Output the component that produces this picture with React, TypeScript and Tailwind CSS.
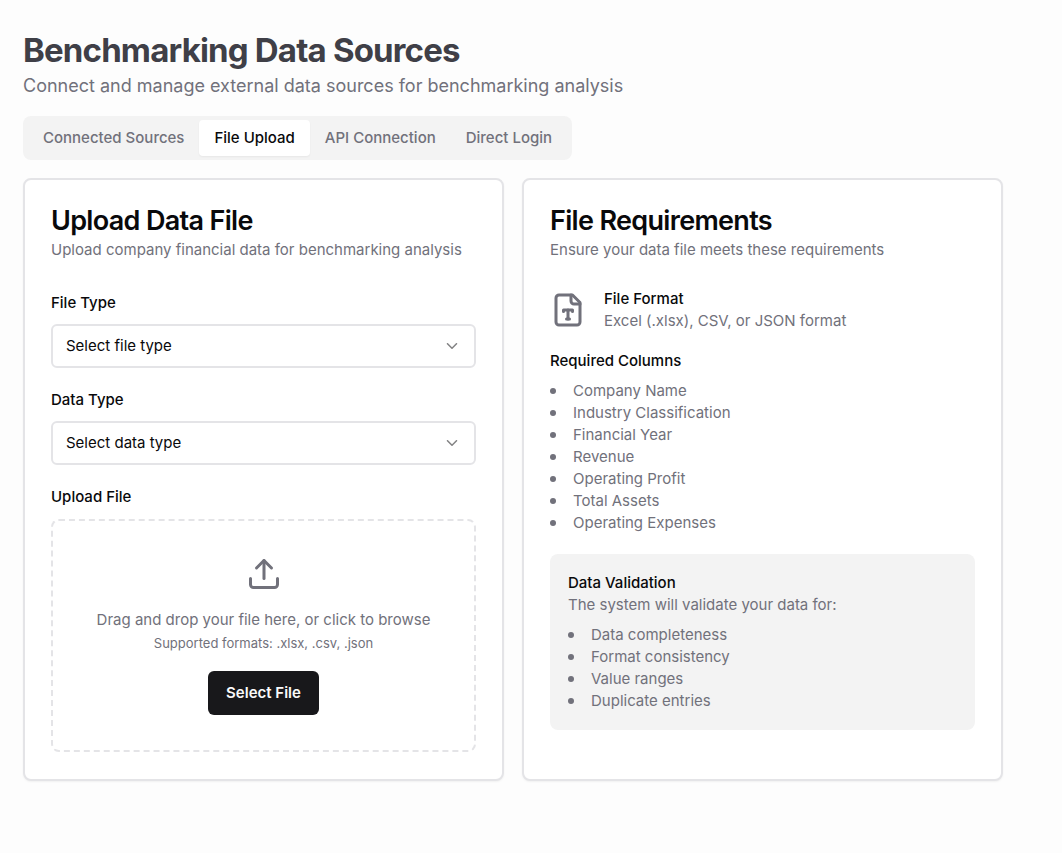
import { useRef, useState, type ReactNode } from "react";

const tabs = ["Connected Sources", "File Upload", "API Connection", "Direct Login"];

const requiredColumns = [
  "Company Name",
  "Industry Classification",
  "Financial Year",
  "Revenue",
  "Operating Profit",
  "Total Assets",
  "Operating Expenses",
];

const validationChecks = [
  "Data completeness",
  "Format consistency",
  "Value ranges",
  "Duplicate entries",
];

function ChevronIcon() {
  return (
    <svg
      aria-hidden="true"
      viewBox="0 0 24 24"
      fill="none"
      stroke="currentColor"
      strokeWidth="2"
      strokeLinecap="round"
      strokeLinejoin="round"
      className="pointer-events-none absolute top-1/2 right-[15px] size-[18px] -translate-y-1/2 text-zinc-950 opacity-50"
    >
      <path d="m6 9 6 6 6-6" />
    </svg>
  );
}

function UploadIcon() {
  return (
    <svg
      aria-hidden="true"
      viewBox="0 0 24 24"
      fill="none"
      stroke="currentColor"
      strokeWidth="2"
      strokeLinecap="round"
      strokeLinejoin="round"
      className="size-9 text-zinc-500"
    >
      <path d="M21 15v4a2 2 0 0 1-2 2H5a2 2 0 0 1-2-2v-4" />
      <path d="m17 8-5-5-5 5" />
      <path d="M12 3v12" />
    </svg>
  );
}

function FileTypeIcon() {
  return (
    <svg
      aria-hidden="true"
      viewBox="0 0 24 24"
      fill="none"
      stroke="currentColor"
      strokeWidth="2"
      strokeLinecap="round"
      strokeLinejoin="round"
      className="size-9 shrink-0 text-zinc-500"
    >
      <path d="M15 2H6a2 2 0 0 0-2 2v16a2 2 0 0 0 2 2h12a2 2 0 0 0 2-2V7Z" />
      <path d="M14 2v4a2 2 0 0 0 2 2h4" />
      <path d="M9 13v-1h6v1" />
      <path d="M12 12v6" />
      <path d="M11 18h2" />
    </svg>
  );
}

function Card({ title, description, children }: { title: string; description: string; children: ReactNode }) {
  return (
    <section className="min-w-0 rounded-lg border-2 border-zinc-200 bg-white px-[26px] py-[27px] shadow-xs">
      <h2 className="text-[27px] leading-7 font-semibold tracking-tight text-zinc-950">{title}</h2>
      <p className="mt-1 text-[15px] leading-[22px] text-zinc-500">{description}</p>
      {children}
    </section>
  );
}

function SelectField({ id, label, options }: { id: string; label: string; options: string[] }) {
  return (
    <div>
      <label htmlFor={id} className="block text-[15px] leading-4 font-medium text-zinc-950">
        {label}
      </label>
      <div className="relative mt-[13px]">
        <select
          id={id}
          className="block h-11 w-full appearance-none rounded-md border-2 border-zinc-200 bg-white px-[13px] text-[15px] text-zinc-950"
        >
          {options.map((option) => (
            <option key={option}>{option}</option>
          ))}
        </select>
        <ChevronIcon />
      </div>
    </div>
  );
}

function BulletList({ items }: { items: string[] }) {
  return (
    <ul className="mt-2 text-[15px] leading-[22px] text-zinc-500">
      {items.map((item) => (
        <li key={item} className="flex items-center gap-[17px]">
          <span className="size-[6px] rounded-full bg-zinc-500" />
          {item}
        </li>
      ))}
    </ul>
  );
}

export default function App() {
  const [active, setActive] = useState("File Upload");
  const fileInput = useRef<HTMLInputElement>(null);

  return (
    <main className="min-h-screen bg-[#fdfdfd] py-8 pr-[59px] pl-[23px] font-['Inter',sans-serif]">
      <h1 className="text-[33px] leading-9 font-bold tracking-tight text-zinc-700">Benchmarking Data Sources</h1>
      <p className="mt-1 text-lg leading-7 text-zinc-500">
        Connect and manage external data sources for benchmarking analysis
      </p>

      <div role="tablist" className="mt-4 inline-flex h-11 items-center rounded-lg bg-[#f3f3f3] px-[5px]">
        {tabs.map((tab) => (
          <button
            key={tab}
            type="button"
            role="tab"
            aria-selected={tab === active}
            onClick={() => setActive(tab)}
            className={
              tab === active
                ? "h-9 rounded-sm bg-white px-[15px] text-[15px] font-medium text-zinc-950 shadow-xs"
                : "h-9 rounded-sm px-[15px] text-[15px] font-medium text-zinc-500"
            }
          >
            {tab}
          </button>
        ))}
      </div>

      <div className="mt-[18px] grid grid-cols-2 gap-[18px]">
        <Card title="Upload Data File" description="Upload company financial data for benchmarking analysis">
          <div className="mt-[34px] flex flex-col gap-6">
            <SelectField
              id="file-type"
              label="File Type"
              options={["Select file type", "Excel (.xlsx)", "CSV", "JSON"]}
            />
            <SelectField
              id="data-type"
              label="Data Type"
              options={["Select data type", "Company financials", "Industry averages"]}
            />
            <div>
              <label htmlFor="upload" className="block text-[15px] leading-4 font-medium text-zinc-950">
                Upload File
              </label>
              <div className="mt-[14px] flex flex-col items-center rounded-lg border-2 border-dashed border-zinc-200 px-4 py-[35px] text-center">
                <UploadIcon />
                <p className="mt-[17px] text-[15px] leading-[22px] text-zinc-500">
                  Drag and drop your file here, or click to browse
                </p>
                <p className="mt-[3px] text-[13px] leading-[18px] text-zinc-500">
                  Supported formats: .xlsx, .csv, .json
                </p>
                <input ref={fileInput} id="upload" type="file" accept=".xlsx,.csv,.json" className="hidden" />
                <button
                  type="button"
                  onClick={() => fileInput.current?.click()}
                  className="mt-[19px] h-11 rounded-md bg-zinc-900 px-[18px] text-[15px] font-semibold text-zinc-50"
                >
                  Select File
                </button>
              </div>
            </div>
          </div>
        </Card>

        <Card title="File Requirements" description="Ensure your data file meets these requirements">
          <div className="mt-[27px] flex items-center gap-[18px]">
            <FileTypeIcon />
            <div className="text-[15px] leading-[22px]">
              <h3 className="font-medium text-zinc-950">File Format</h3>
              <p className="text-zinc-500">Excel (.xlsx), CSV, or JSON format</p>
            </div>
          </div>

          <h3 className="mt-[18px] text-[15px] leading-[22px] font-medium text-zinc-950">Required Columns</h3>
          <BulletList items={requiredColumns} />

          <div className="mt-5 rounded-lg bg-[#f3f3f3] p-[18px]">
            <h3 className="text-[15px] leading-[22px] font-medium text-zinc-950">Data Validation</h3>
            <p className="text-[15px] leading-[22px] text-zinc-500">The system will validate your data for:</p>
            <BulletList items={validationChecks} />
          </div>
        </Card>
      </div>
    </main>
  );
}
